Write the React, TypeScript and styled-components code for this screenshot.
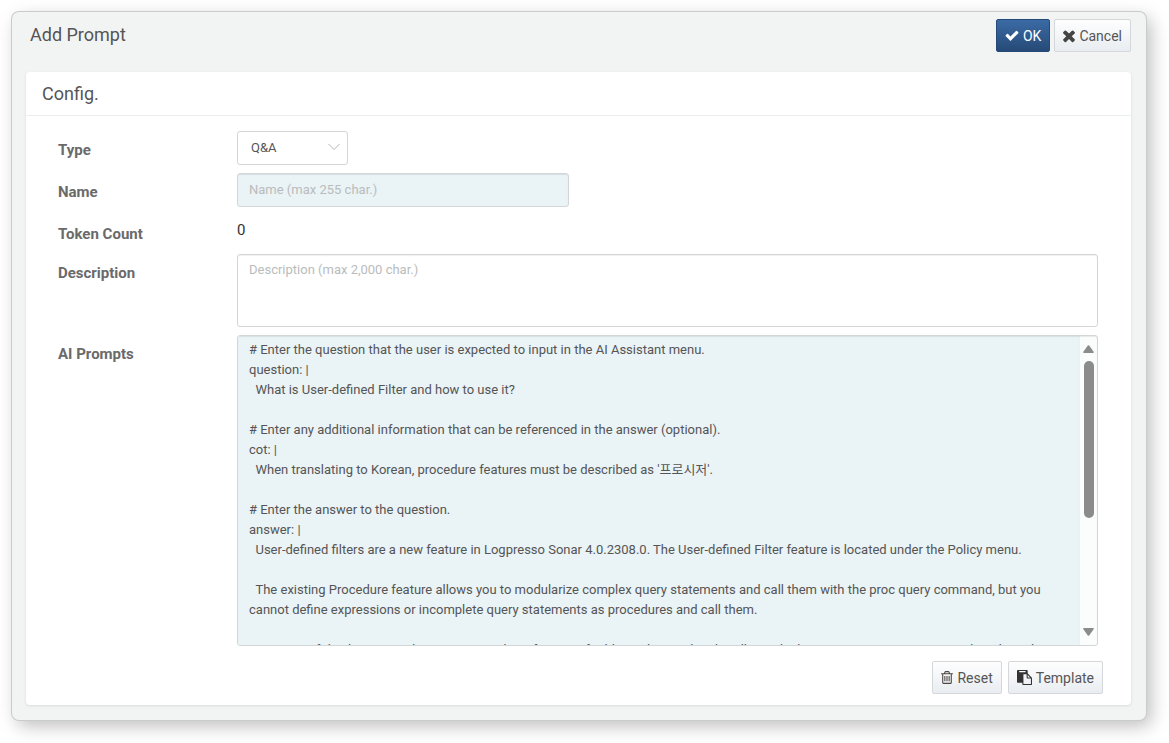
import React, { useId, useState } from "react";
import styled, { createGlobalStyle, css } from "styled-components";

const GlobalStyle = createGlobalStyle`
  *, *::before, *::after { box-sizing: border-box; }
  body {
    margin: 0;
    background: #fff;
    color: #555;
    font-family: Roboto, "Noto Sans CJK KR", sans-serif;
    font-size: 13px;
    line-height: 20px;
  }
  button, input, textarea, select { font: inherit; color: inherit; }
`;

const Page = styled.div`
  padding: 12px 23px 23px 12px;
`;

const Dialog = styled.section`
  padding: 0 15px 15px 14px;
  background: #f2f4f4;
  border-radius: 7px;
  box-shadow: 0 0 0 1px #c9cccc, 5px 6px 18px rgba(0, 0, 0, 0.26);
`;

const DialogHeader = styled.header`
  display: flex;
  justify-content: space-between;
  align-items: flex-start;
  height: 60px;
  padding: 7px 0 0 4px;
`;

const Title = styled.h1`
  margin: 0;
  font-size: 18px;
  font-weight: 400;
  line-height: 32px;
`;

const ButtonGroup = styled.div<{ $gap: number }>`
  display: flex;
  gap: ${(p) => p.$gap}px;
`;

const Button = styled.button<{ $primary?: boolean }>`
  display: inline-flex;
  align-items: center;
  gap: 4px;
  height: 33px;
  padding: 0 8px;
  border: 1px solid #d5d8db;
  border-radius: 2px;
  background: linear-gradient(#fefefe, #e9edf1);
  font-size: 14px;
  white-space: nowrap;
  cursor: pointer;
  ${(p) =>
    p.$primary &&
    css`
      border-color: #264a78;
      background: linear-gradient(#3b6ba5, #264a77);
      color: #fff;
    `}
`;

const Icon = styled.svg`
  height: 15px;
  fill: currentColor;
  flex: none;
`;

const Card = styled.div`
  background: #fff;
  border-radius: 4px;
  box-shadow: 0 1px 3px rgba(0, 0, 0, 0.1);
`;

const CardTitle = styled.h2`
  margin: 0;
  padding: 0 16px;
  border-bottom: 1px solid #eceeee;
  font-size: 18px;
  font-weight: 400;
  line-height: 43px;
`;

const Form = styled.form`
  display: flex;
  flex-direction: column;
  gap: 8px;
  padding: 15px 28px 11px 32px;
`;

const Row = styled.div`
  display: grid;
  grid-template-columns: 179px minmax(0, 1fr);
  align-items: start;
  padding-right: 5px;
`;

const Label = styled.label`
  padding-top: 9px;
  font-size: 15px;
  font-weight: 700;
  color: #6a6a6a;
`;

const fieldStyle = css`
  border: 1px solid #d3d6d6;
  border-radius: 3px;
  background: #fff;
  outline: none;
  &::placeholder { color: #b9bcbc; opacity: 1; }
`;

const SelectBox = styled.div`
  display: grid;
  width: 111px;
  align-items: center;
  & > * { grid-area: 1 / 1; }
`;

const Select = styled.select`
  ${fieldStyle}
  appearance: none;
  width: 100%;
  height: 34px;
  padding: 0 13px;
`;

const Chevron = styled.svg`
  justify-self: end;
  width: 12px;
  height: 8px;
  margin: 0 8px 2px 0;
  fill: none;
  stroke: #b4b7b7;
  pointer-events: none;
`;

const TextInput = styled.input`
  ${fieldStyle}
  width: 332px;
  height: 34px;
  padding: 0 11px 2px;
  background: #eaf3f6;
  box-shadow: inset 0 1px 1px rgba(0, 0, 0, 0.08);
`;

const Output = styled.output`
  height: 31px;
  padding-top: 5px;
  font-size: 15px;
  color: #333;
`;

const Description = styled.textarea`
  ${fieldStyle}
  display: block;
  width: 100%;
  height: 73px;
  padding: 5px 11px;
  resize: none;
  box-shadow: inset 0 1px 1px rgba(0, 0, 0, 0.06);
`;

const PromptBox = styled.div`
  ${fieldStyle}
  display: flex;
  height: 311px;
  overflow: hidden;
  background: #fbfcfc;
  box-shadow: inset 0 1px 1px rgba(0, 0, 0, 0.08);
`;

const PromptArea = styled.textarea`
  flex: 1;
  min-width: 0;
  padding: 4px 11px;
  border: 0;
  outline: none;
  background: #eaf3f6;
  box-shadow: inset 0 1px 1px rgba(0, 0, 0, 0.08);
  resize: none;
  scrollbar-width: none;
`;

const ScrollTrack = styled.div`
  display: flex;
  flex-direction: column;
  align-items: center;
  gap: 8px;
  width: 17px;
  padding: 9px 0;
`;

const ScrollThumb = styled.div`
  width: 10px;
  height: 157px;
  margin-bottom: auto;
  border-radius: 5px;
  background: #8b8b8b;
`;

const ScrollArrow = styled.svg`
  width: 11px;
  height: 8px;
  fill: #8b8b8b;
`;

const Actions = styled.div`
  display: flex;
  justify-content: flex-end;
  padding-top: 7px;
`;

const icons = {
  check: {
    box: "121 0 1550 1792",
    width: 14,
    d: "M1671 566q0 40-28 68l-724 724-136 136q-28 28-68 28t-68-28l-136-136-362-362q-28-28-28-68t28-68l136-136q28-28 68-28t68 28l294 295 656-657q28-28 68-28t68 28l136 136q28 28 28 68z",
  },
  times: {
    box: "302 128 1188 1500",
    width: 12,
    d: "M1490 1322q0 40-28 68l-136 136q-28 28-68 28t-68-28l-294-294-294 294q-28 28-68 28t-68-28l-136-136q-28-28-28-68t28-68l294-294-294-294q-28-28-28-68t28-68l136-136q28-28 68-28t68 28l294 294 294-294q28-28 68-28t68 28l136 136q28 28 28 68t-28 68l-294 294 294 294q28 28 28 68z",
  },
  trash: {
    box: "192 0 1408 1792",
    width: 12,
    d: "M704 736v576q0 14-9 23t-23 9h-64q-14 0-23-9t-9-23v-576q0-14 9-23t23-9h64q14 0 23 9t9 23zm256 0v576q0 14-9 23t-23 9h-64q-14 0-23-9t-9-23v-576q0-14 9-23t23-9h64q14 0 23 9t9 23zm256 0v576q0 14-9 23t-23 9h-64q-14 0-23-9t-9-23v-576q0-14 9-23t23-9h64q14 0 23 9t9 23zm128 724v-948h-896v948q0 22 7 40.5t14.5 27 10.5 8.5h832q3 0 10.5-8.5t14.5-27 7-40.5zm-672-1076h448l-48-117q-7-9-17-11h-317q-10 2-17 11zm928 32v64q0 14-9 23t-23 9h-96v948q0 83-47 143.5t-113 60.5h-832q-66 0-113-58.5t-47-141.5v-952h-96q-14 0-23-9t-9-23v-64q0-14 9-23t23-9h309l70-167q15-37 54-63t79-26h320q40 0 79 26t54 63l70 167h309q14 0 23 9t9 23z",
  },
  paste: {
    box: "0 0 1792 1792",
    width: 15,
    d: "M768 1664h896v-640h-416q-40 0-68-28t-28-68v-416h-384v1152zm256-1440v-64q0-13-9.5-22.5t-22.5-9.5h-704q-13 0-22.5 9.5t-9.5 22.5v64q0 13 9.5 22.5t22.5 9.5h704q13 0 22.5-9.5t9.5-22.5zm256 672h299l-299-299v299zm512 128v672q0 40-28 68t-68 28h-960q-40 0-68-28t-28-68v-160h-544q-40 0-68-28t-28-68v-1344q0-40 28-68t68-28h1088q40 0 68 28t28 68v328q21 13 36 28l408 408q28 28 48 76t20 88z",
  },
};

const iconColors = {
  check: "#fff",
  times: "#444",
  trash: "#4d4542",
  paste: "#333",
};

function Glyph({ name }: { name: keyof typeof icons }) {
  const { box, width, d } = icons[name];
  return (
    <Icon viewBox={box} width={width} aria-hidden="true">
      <path d={d} fill={iconColors[name]} />
    </Icon>
  );
}

const template = `# Enter the question that the user is expected to input in the AI Assistant menu.
question: |
  What is User-defined Filter and how to use it?

# Enter any additional information that can be referenced in the answer (optional).
cot: |
  When translating to Korean, procedure features must be described as '프로시저'.

# Enter the answer to the question.
answer: |
  User-defined filters are a new feature in Logpresso Sonar 4.0.2308.0. The User-defined Filter feature is located under the Policy menu.

  The existing Procedure feature allows you to modularize complex query statements and call them with the proc query command, but you cannot define expressions or incomplete query statements as procedures and call them.

  Because of this limitation, there was a number of cases of additional procedure handling, which means you were managing them based on`;

export default function App() {
  const id = useId();
  const [prompt, setPrompt] = useState(template);

  return (
    <Page>
      <GlobalStyle />
      <Dialog aria-labelledby={`${id}-title`}>
        <DialogHeader>
          <Title id={`${id}-title`}>Add Prompt</Title>
          <ButtonGroup $gap={4}>
            <Button type="submit" form={`${id}-form`} $primary>
              <Glyph name="check" />
              OK
            </Button>
            <Button type="button">
              <Glyph name="times" />
              Cancel
            </Button>
          </ButtonGroup>
        </DialogHeader>
        <Card>
          <CardTitle>Config.</CardTitle>
          <Form id={`${id}-form`} onSubmit={(e) => e.preventDefault()}>
            <Row>
              <Label htmlFor={`${id}-type`}>Type</Label>
              <SelectBox>
                <Select id={`${id}-type`} defaultValue="qa">
                  <option value="qa">Q&amp;A</option>
                </Select>
                <Chevron viewBox="0 0 12 8" aria-hidden="true">
                  <path d="M0.5 1 L6 6.5 L11.5 1" />
                </Chevron>
              </SelectBox>
            </Row>
            <Row>
              <Label htmlFor={`${id}-name`}>Name</Label>
              <TextInput id={`${id}-name`} placeholder="Name (max 255 char.)" />
            </Row>
            <Row>
              <Label htmlFor={`${id}-tokens`}>Token Count</Label>
              <Output id={`${id}-tokens`}>0</Output>
            </Row>
            <Row>
              <Label htmlFor={`${id}-desc`}>Description</Label>
              <Description id={`${id}-desc`} placeholder="Description (max 2,000 char.)" />
            </Row>
            <Row>
              <Label htmlFor={`${id}-prompt`}>AI Prompts</Label>
              <PromptBox>
                <PromptArea
                  id={`${id}-prompt`}
                  spellCheck={false}
                  value={prompt}
                  onChange={(e) => setPrompt(e.target.value)}
                />
                <ScrollTrack aria-hidden="true">
                  <ScrollArrow viewBox="0 0 11 8">
                    <path d="M4.8 0.5 Q5.5 -0.2 6.2 0.5 L10.8 7 Q11 8 10 8 H1 Q0 8 0.2 7 Z" />
                  </ScrollArrow>
                  <ScrollThumb />
                  <ScrollArrow viewBox="0 0 11 8">
                    <path d="M4.8 7.5 Q5.5 8.2 6.2 7.5 L10.8 1 Q11 0 10 0 H1 Q0 0 0.2 1 Z" />
                  </ScrollArrow>
                </ScrollTrack>
              </PromptBox>
            </Row>
            <Actions>
              <ButtonGroup $gap={6}>
                <Button type="button" onClick={() => setPrompt("")}>
                  <Glyph name="trash" />
                  Reset
                </Button>
                <Button type="button" onClick={() => setPrompt(template)}>
                  <Glyph name="paste" />
                  Template
                </Button>
              </ButtonGroup>
            </Actions>
          </Form>
        </Card>
      </Dialog>
    </Page>
  );
}
